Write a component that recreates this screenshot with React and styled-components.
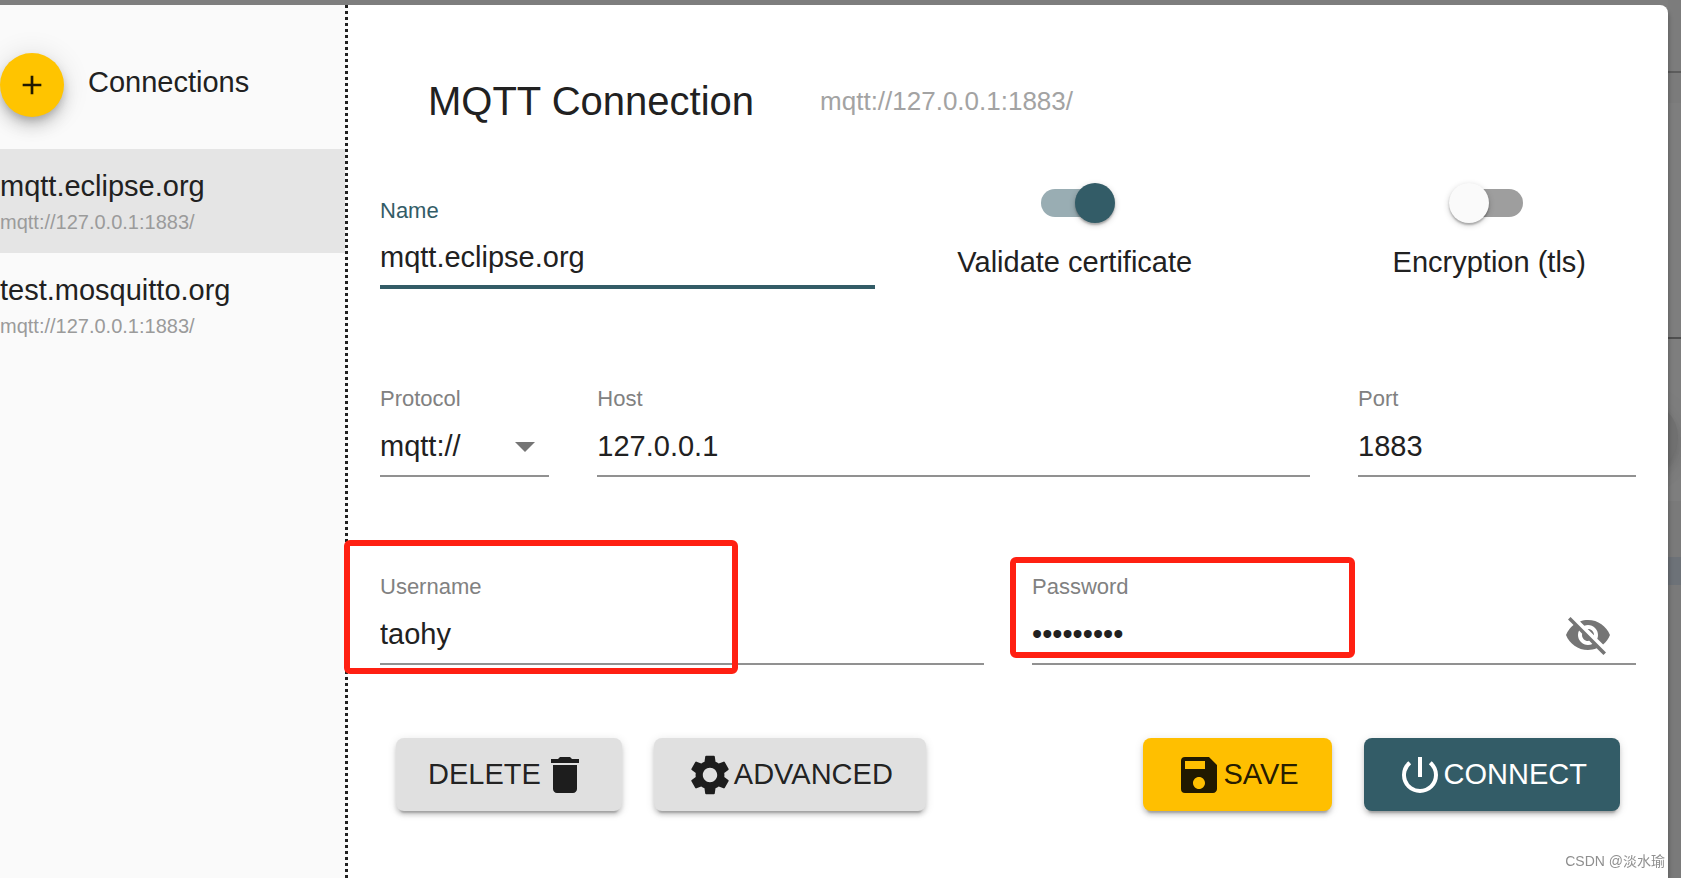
import React, { useState } from "react";
import styled, { createGlobalStyle, css } from "styled-components";
import {
  MdAdd,
  MdDelete,
  MdPowerSettingsNew,
  MdSave,
  MdSettings,
  MdVisibilityOff,
} from "react-icons/md";

const GlobalStyle = createGlobalStyle`
  * {
    box-sizing: border-box;
  }

  body {
    margin: 0;
    overflow: hidden;
    background-color: #7e7e7e;
    color: #212121;
    font-family: "Liberation Sans", Arial, "Noto Sans CJK SC", sans-serif;
    font-size: 29px;
  }

  button, input, select {
    font: inherit;
    color: inherit;
  }
`;

const Page = styled.div`
  display: flex;
  min-height: 100vh;
`;

const Dialog = styled.div`
  position: relative;
  z-index: 1;
  flex: 1;
  display: flex;
  margin-top: 5px;
  background-color: white;
  border-top-right-radius: 8px;
  box-shadow: 3px 4px 4px -2px rgba(0, 0, 0, 0.25);
`;

/* the slice of the main window that stays visible beside the dialog */
const Behind = styled.div`
  position: relative;
  width: 13px;
  display: flex;
  flex-direction: column;
`;

const BehindPart = styled.div`
  flex: 0 0 ${(props) => props.$size}px;
  background-color: ${(props) => props.$color || "#7e7e7e"};
  border-bottom: ${(props) => (props.$line ? `2px solid ${props.$line}` : "0")};
`;

const BehindFab = styled.div`
  position: absolute;
  top: 401px;
  right: 3px;
  width: 72px;
  height: 72px;
  border-radius: 50%;
  background-color: #707070;
  box-shadow: 0 5px 8px -2px rgba(0, 0, 0, 0.1),
    0 10px 16px 0 rgba(0, 0, 0, 0.07), 0 2px 29px 0 rgba(0, 0, 0, 0.06);
`;

const Sidebar = styled.aside`
  width: 348px;
  background-color: #fafafa;
  border-right: 3px dotted #212121;
`;

const SidebarHeader = styled.div`
  display: flex;
  gap: 24px;
  padding: 48px 0 32px;
`;

const AddButton = styled.button`
  display: flex;
  align-items: center;
  justify-content: center;
  width: 64px;
  height: 64px;
  padding: 0;
  border: 0;
  border-radius: 50%;
  background-color: #ffc400;
  color: rgba(0, 0, 0, 0.87);
  font-size: 32px;
  cursor: pointer;
  box-shadow: 0 5px 8px -2px rgba(0, 0, 0, 0.2),
    0 10px 16px 0 rgba(0, 0, 0, 0.14), 0 2px 29px 0 rgba(0, 0, 0, 0.12);
`;

const SidebarTitle = styled.h2`
  margin: 0;
  font-size: 29px;
  font-weight: 400;
  line-height: 58px;
`;

const ConnectionList = styled.ul`
  margin: 0;
  padding: 0;
  list-style: none;
`;

const ConnectionButton = styled.button`
  display: block;
  width: 100%;
  padding: 16px 0;
  border: 0;
  background-color: ${(props) => (props.$selected ? "#e5e5e5" : "transparent")};
  text-align: left;
  cursor: pointer;
`;

const ConnectionName = styled.div`
  line-height: 42px;
`;

const ConnectionUrl = styled.div`
  color: #9b9b9b;
  font-size: 20px;
  line-height: 30px;
`;

const Main = styled.main`
  flex: 1;
  padding: 64px 32px 32px;
`;

const MainHeader = styled.header`
  display: flex;
  align-items: center;
  gap: 66px;
  padding-left: 48px;
  margin-bottom: 66px;
`;

const Title = styled.h1`
  margin: 0;
  font-size: 40px;
  font-weight: 400;
  line-height: 64px;
`;

const TitleUrl = styled.span`
  color: #a3a3a3;
  font-size: 26px;
`;

const Fields = styled.div`
  display: grid;
  grid-template-columns: repeat(12, 1fr);
  gap: 98px 48px;
`;

const Field = styled.div`
  position: relative;
  grid-column: span ${(props) => props.$span};
  display: flex;
  flex-direction: column;
  gap: 6px;
  min-width: 0;
`;

const Label = styled.label`
  color: ${(props) => (props.$focused ? "#335c67" : "#818181")};
  font-size: 22px;
  line-height: 24px;
`;

const control = css`
  width: 100%;
  height: 60px;
  padding: 0;
  border: 0;
  border-bottom: 2px solid #919191;
  border-radius: 0;
  background-color: transparent;
  outline: none;
`;

const Input = styled.input`
  ${control}
  ${(props) => props.$focused && "border-bottom: 4px solid #335c67;"}
`;

const Select = styled.select`
  ${control}
  grid-area: 1 / 1;
  appearance: none;
`;

const ControlBox = styled.div`
  display: grid;
  align-items: center;
`;

const Arrow = styled.svg`
  grid-area: 1 / 1;
  justify-self: end;
  width: 20px;
  height: 10px;
  margin-right: 14px;
  fill: #757575;
  pointer-events: none;
`;

const PasswordInput = styled(Input)`
  grid-area: 1 / 1;
  padding-right: 80px;
`;

const EyeButton = styled.button`
  grid-area: 1 / 1;
  justify-self: end;
  display: flex;
  margin-right: 24px;
  padding: 0;
  border: 0;
  background: none;
  color: #757575;
  font-size: 48px;
  cursor: pointer;
`;

const Toggles = styled.div`
  grid-column: span 7;
  display: flex;
  justify-content: space-between;
  align-items: flex-start;
  margin-top: -16px;
  padding: 0 50px 0 34px;
`;

const ToggleLabel = styled.label`
  display: flex;
  flex-direction: column;
  align-items: center;
  gap: 18px;
  line-height: 42px;
`;

const Switch = styled.input`
  appearance: none;
  display: grid;
  align-items: center;
  width: 80px;
  height: 40px;
  margin: 0;
  cursor: pointer;

  &::before {
    content: "";
    grid-area: 1 / 1;
    justify-self: center;
    width: 68px;
    height: 28px;
    border-radius: 14px;
    background-color: #9e9e9e;
  }

  &::after {
    content: "";
    grid-area: 1 / 1;
    justify-self: start;
    width: 40px;
    height: 40px;
    border-radius: 50%;
    background-color: #fafafa;
    box-shadow: 0 2px 2px rgba(0, 0, 0, 0.24), 0 2px 6px rgba(0, 0, 0, 0.2);
  }

  &:checked::before {
    background-color: #99adb3;
  }

  &:checked::after {
    justify-self: end;
    background-color: #335c67;
  }
`;

const Actions = styled.div`
  display: flex;
  justify-content: space-between;
  margin-top: 73px;
  padding: 0 16px;
`;

const ActionGroup = styled.div`
  display: flex;
  gap: 32px;
`;

const colors = {
  default: "#e0e0e0",
  secondary: "#ffbf00",
  primary: "#335c67",
};

const ActionButton = styled.button`
  display: flex;
  align-items: center;
  min-height: 73px;
  padding: 12px 33px 12px 32px;
  border: 0;
  border-radius: 8px;
  background-color: ${(props) => colors[props.$color || "default"]};
  color: ${(props) =>
    props.$color === "primary" ? "white" : "rgba(0, 0, 0, 0.87)"};
  text-transform: uppercase;
  cursor: pointer;
  box-shadow: 0 6px 2px -4px rgba(0, 0, 0, 0.2), 0 4px 4px 0 rgba(0, 0, 0, 0.14),
    0 2px 10px 0 rgba(0, 0, 0, 0.12);

  svg {
    width: 48px;
    height: 48px;
  }
`;

const Mark = styled.div`
  position: absolute;
  top: ${(props) => props.$top}px;
  left: ${(props) => props.$left}px;
  width: ${(props) => props.$width}px;
  height: ${(props) => props.$height}px;
  border: 6px solid #ff2012;
  border-radius: 6px;
  pointer-events: none;
`;

const Watermark = styled.div`
  position: fixed;
  z-index: 2;
  right: 16px;
  bottom: 7px;
  color: #8f8f8f;
  font-size: 14px;
  line-height: 20px;
  text-shadow: 1px 1px 0 white;
`;

const connections = [
  { name: "mqtt.eclipse.org", url: "mqtt://127.0.0.1:1883/" },
  { name: "test.mosquitto.org", url: "mqtt://127.0.0.1:1883/" },
];

function Toggle({ label, initial }) {
  const [checked, setChecked] = useState(initial);
  return (
    <ToggleLabel>
      <Switch
        type="checkbox"
        checked={checked}
        onChange={(e) => setChecked(e.target.checked)}
      />
      {label}
    </ToggleLabel>
  );
}

function Connections({ selected, onSelect }) {
  return (
    <Sidebar>
      <SidebarHeader>
        <AddButton aria-label="Add connection">
          <MdAdd />
        </AddButton>
        <SidebarTitle>Connections</SidebarTitle>
      </SidebarHeader>
      <ConnectionList>
        {connections.map((connection, index) => (
          <li key={connection.name}>
            <ConnectionButton
              $selected={index === selected}
              onClick={() => onSelect(index)}
            >
              <ConnectionName>{connection.name}</ConnectionName>
              <ConnectionUrl>{connection.url}</ConnectionUrl>
            </ConnectionButton>
          </li>
        ))}
      </ConnectionList>
    </Sidebar>
  );
}

export default function App() {
  const [selected, setSelected] = useState(0);
  const [showPassword, setShowPassword] = useState(false);

  return (
    <Page>
      <GlobalStyle />
      <Dialog>
        <Connections selected={selected} onSelect={setSelected} />
        <Main>
          <MainHeader>
            <Title>MQTT Connection</Title>
            <TitleUrl>mqtt://127.0.0.1:1883/</TitleUrl>
          </MainHeader>
          <Fields>
            <Field $span={5}>
              <Label htmlFor="name" $focused>
                Name
              </Label>
              <Input id="name" defaultValue="mqtt.eclipse.org" $focused />
            </Field>
            <Toggles>
              <Toggle label="Validate certificate" initial={true} />
              <Toggle label="Encryption (tls)" initial={false} />
            </Toggles>
            <Field $span={2}>
              <Label htmlFor="protocol">Protocol</Label>
              <ControlBox>
                <Select id="protocol" defaultValue="mqtt">
                  <option value="mqtt">mqtt://</option>
                  <option value="ws">ws://</option>
                </Select>
                <Arrow viewBox="0 0 20 10">
                  <path d="M0 0h20L10 10z" />
                </Arrow>
              </ControlBox>
            </Field>
            <Field $span={7}>
              <Label htmlFor="host">Host</Label>
              <Input id="host" defaultValue="127.0.0.1" />
            </Field>
            <Field $span={3}>
              <Label htmlFor="port">Port</Label>
              <Input id="port" defaultValue="1883" />
            </Field>
            <Field $span={6}>
              <Label htmlFor="username">Username</Label>
              <Input id="username" defaultValue="taohy" />
              <Mark $top={-35} $left={-36} $width={394} $height={134} />
            </Field>
            <Field $span={6}>
              <Label htmlFor="password">Password</Label>
              <ControlBox>
                <PasswordInput
                  id="password"
                  type={showPassword ? "text" : "password"}
                  defaultValue="taohy1234"
                />
                <EyeButton
                  aria-label="Toggle password visibility"
                  onClick={() => setShowPassword(!showPassword)}
                >
                  <MdVisibilityOff />
                </EyeButton>
              </ControlBox>
              <Mark $top={-18} $left={-22} $width={345} $height={101} />
            </Field>
          </Fields>
          <Actions>
            <ActionGroup>
              <ActionButton>
                Delete
                <MdDelete />
              </ActionButton>
              <ActionButton>
                <MdSettings />
                Advanced
              </ActionButton>
            </ActionGroup>
            <ActionGroup>
              <ActionButton $color="secondary">
                <MdSave />
                Save
              </ActionButton>
              <ActionButton $color="primary">
                <MdPowerSettingsNew />
                Connect
              </ActionButton>
            </ActionGroup>
          </Actions>
        </Main>
      </Dialog>
      <Behind>
        <BehindPart $size={73} $color="#7c7c7c" $line="#5c5c5c" />
        <BehindPart $size={30} $color="#7b7b7b" />
        <BehindPart $size={236} $line="#4f4f4f" />
        <BehindPart $size={162} />
        <BehindPart $size={56} $color="#7a7a7a" />
        <BehindPart $size={28} $color="#6d7278" />
        <BehindPart $size={293} $color="#7a7a7a" />
        <BehindFab />
      </Behind>
      <Watermark>CSDN @淡水瑜</Watermark>
    </Page>
  );
}
